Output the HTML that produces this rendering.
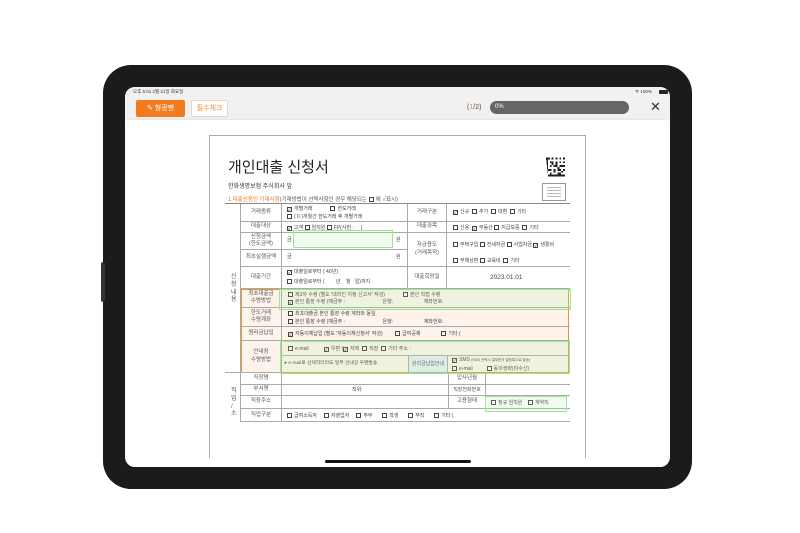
<!DOCTYPE html>
<html><head><meta charset="utf-8"><style>
*{margin:0;padding:0;box-sizing:border-box}
body{width:800px;height:533px;background:#fff;position:relative;overflow:hidden;font-family:"Liberation Sans","Noto Sans CJK KR",sans-serif;color:#333}
.a{position:absolute}
.t{position:absolute;font-size:5px;color:#444;white-space:nowrap;line-height:1}
.l{position:absolute;font-size:5.5px;color:#555;text-align:center;white-space:nowrap;line-height:1.3;display:flex;align-items:center;justify-content:center;border-right:0.6px solid #aaa;border-bottom:0.6px solid #aaa}
.hl{position:absolute;border-bottom:0.6px solid #aaa}
.cb{display:inline-block;width:5px;height:5px;border:0.6px solid #444;vertical-align:-1px;margin-right:2px;font-size:5px;line-height:4px;text-align:center}
.g{position:absolute;border:1.5px solid #9de88f;background:rgba(180,240,170,.18)}
</style></head><body>
<!-- bezel -->
<div class="a" style="left:103px;top:65px;width:589px;height:424px;background:#1b1b1b;border-radius:28px"></div>
<div class="a" style="left:101px;top:262px;width:4px;height:40px;background:#333;border-radius:2px"></div>
<div class="a" style="left:125px;top:87px;width:545px;height:380px;background:#fff;border-radius:10px;overflow:hidden">
  <div class="a" style="left:0;top:0;width:545px;height:33px;background:#f1f1f1"></div>
  <div class="t" style="left:8px;top:3px;font-size:4.5px;color:#333">오후 5:01 2월 21일 화요일</div>
  <div class="t" style="left:510px;top:3px;font-size:4.5px;color:#333">ᯤ 100%</div>
  <div class="a" style="left:534px;top:3px;width:9px;height:4px;background:#222;border-radius:1px"></div>
  <div class="a" style="left:11px;top:13px;width:49px;height:17px;background:#f47a1e;border-radius:2px;color:#fff;font-size:7px;text-align:center;line-height:17px">✎ 형광펜</div>
  <div class="a" style="left:66px;top:13px;width:37px;height:17px;background:#fff;border:0.8px solid #f1d4bd;border-radius:2px;color:#f08a3a;font-size:7px;text-align:center;line-height:16px">필수체크</div>
  <div class="t" style="left:342px;top:17px;font-size:7px;color:#555">(<span style="color:#f08a3a">1</span>/2)</div>
  <div class="a" style="left:365px;top:14px;width:139px;height:13px;background:#666;border-radius:7px;color:#fff;font-size:6px;line-height:13px;padding-left:5px">0%</div>
  <div class="t" style="left:525px;top:13px;font-size:13px;color:#333">✕</div>
  <div class="a" style="left:2px;top:33px;width:541px;height:360px;background:#fff;border-radius:6px 6px 0 0;box-shadow:0 -1px 2px rgba(0,0,0,.06)"></div>
</div>
<!-- paper -->
<div class="a" style="left:209px;top:135px;width:377px;height:323px;border:0.8px solid #aaa;border-bottom:none;background:#fff"></div>
<div class="t" style="left:228px;top:160px;font-size:15px;color:#222">개인대출 신청서</div>
<svg class="a" style="left:546px;top:157px" width="19" height="20" viewBox="0 0 10 10" shape-rendering="crispEdges"><path fill="#222" d="M0 0h1v10h9v-1h-9zM1 0h1v1h-1zM3 0h1v1h-1zM5 0h1v1h-1zM7 0h1v1h-1zM9 0h1v1h-1zM9 2h1v1h-1zM9 4h1v1h-1zM9 6h1v1h-1zM2 2h2v1h-2zM5 2h1v2h-1zM7 2h1v1h-1zM2 4h1v1h-1zM4 4h2v1h-2zM7 4h2v1h-2zM1 6h2v1h-2zM4 6h1v2h-1zM6 6h2v1h-2zM2 8h1v1h-1zM6 8h2v1h-2zM3 3h1v1h-1zM6 5h1v1h-1zM8 7h1v1h-1z"/></svg>
<div class="a" style="left:542px;top:183px;width:24px;height:18px;border:0.6px solid #999;padding:3px 4px"><div style="height:1px;background:#bbb;margin-bottom:2px"></div><div style="height:1px;background:#bbb;margin-bottom:2px"></div><div style="height:1px;background:#bbb;margin-bottom:2px"></div><div style="height:1px;background:#bbb"></div></div>
<div class="t" style="left:228px;top:184px;font-size:6px;color:#333">한화생명보험 주식회사 앞</div>
<div class="t" style="left:228px;top:196px;font-size:5.5px;color:#555"><span style="color:#e8761f">1.대출신청인 기재사항</span>(기재방법이 선택사항인 경우 해당되는 <span class="cb"></span>에 <span style="color:#e8761f;font-size:7px">√</span>표시)</div>
<!-- table -->
<div class="a" style="left:225px;top:203px;width:345px;height:0.8px;background:#888"></div>
<div class="a" style="left:241px;top:289px;width:328px;height:84px;background:#fdf3ea;border:1px solid #e8943f"></div>
<div class="a" style="left:240px;top:204px;width:0.6px;height:218px;background:#aaa"></div>
<div class="hl" style="left:225px;top:372px;width:16px"></div>
<div class="t" style="left:231px;top:274px;font-size:6px;line-height:1.3;white-space:normal;width:6px;color:#555">신 청 내 용</div>
<div class="t" style="left:231px;top:388px;font-size:6px;line-height:1.3;white-space:normal;width:6px;color:#555">직 업 / 소</div>
<div class="l" style="left:241px;top:204px;width:41px;height:18px">거래종류</div>
<div class="l" style="left:241px;top:222px;width:41px;height:11px">대출대상</div>
<div class="l" style="left:241px;top:233px;width:41px;height:17px">신청금액<br>(한도금액)</div>
<div class="l" style="left:241px;top:250px;width:41px;height:17px">최초실행금액</div>
<div class="l" style="left:241px;top:267px;width:41px;height:22px">대출기간</div>
<div class="l" style="left:241px;top:289px;width:41px;height:19px">최초대출금<br>수령방법</div>
<div class="l" style="left:241px;top:308px;width:41px;height:19px">한도거래<br>수령계좌</div>
<div class="l" style="left:241px;top:327px;width:41px;height:14px">원리금납입</div>
<div class="l" style="left:241px;top:341px;width:41px;height:32px">안내장<br>수령방법</div>
<div class="l" style="left:241px;top:373px;width:41px;height:12px">직장명</div>
<div class="l" style="left:241px;top:385px;width:41px;height:11px">부서명</div>
<div class="l" style="left:241px;top:396px;width:41px;height:13px">직장주소</div>
<div class="l" style="left:241px;top:409px;width:41px;height:13px;border-bottom:none">직업구분</div>
<div class="hl" style="left:282px;top:221px;width:288px"></div>
<div class="hl" style="left:282px;top:232px;width:288px"></div>
<div class="hl" style="left:282px;top:249px;width:125px"></div>
<div class="hl" style="left:282px;top:266px;width:288px"></div>
<div class="hl" style="left:282px;top:288px;width:288px"></div>
<div class="hl" style="left:282px;top:307px;width:288px"></div>
<div class="hl" style="left:282px;top:326px;width:288px"></div>
<div class="hl" style="left:282px;top:340px;width:288px"></div>
<div class="hl" style="left:282px;top:355px;width:288px"></div>
<div class="hl" style="left:282px;top:384px;width:288px"></div>
<div class="hl" style="left:282px;top:395px;width:288px"></div>
<div class="hl" style="left:282px;top:408px;width:288px"></div>
<div class="hl" style="left:241px;top:421px;width:329px"></div>
<div class="l" style="left:407px;top:204px;width:40px;height:18px;border-left:0.6px solid #aaa">거래구분</div>
<div class="l" style="left:407px;top:222px;width:40px;height:11px;border-left:0.6px solid #aaa">대출과목</div>
<div class="l" style="left:407px;top:233px;width:40px;height:34px;border-left:0.6px solid #aaa">자금용도<br>(거래목적)</div>
<div class="l" style="left:407px;top:267px;width:40px;height:22px;border-left:0.6px solid #aaa">대출희망일</div>
<div class="l" style="left:408px;top:356px;width:40px;height:17px;border-left:0.6px solid #aaa;background:#e8eef5;font-size:5px">원리금납입안내</div>
<div class="l" style="left:448px;top:373px;width:38px;height:12px;border-left:0.6px solid #aaa">입사년월</div>
<div class="l" style="left:448px;top:385px;width:38px;height:11px;border-left:0.6px solid #aaa;font-size:5px">직장전화번호</div>
<div class="l" style="left:448px;top:396px;width:38px;height:13px;border-left:0.6px solid #aaa">고용형태</div>
<div class="t" style="left:287px;top:206px"><span class="cb">✓</span>개별거래 &nbsp;&nbsp;&nbsp;&nbsp;&nbsp;&nbsp;&nbsp;&nbsp;&nbsp;&nbsp;&nbsp;&nbsp;<span class="cb"></span>한도거래</div>
<div class="t" style="left:287px;top:214px"><span class="cb"></span>( 0 )개월간 한도거래 후 개별거래</div>
<div class="t" style="left:287px;top:225px"><span class="cb">✓</span>고객 <span class="cb"></span>임직원 <span class="cb"></span>FP(사번 : &nbsp;&nbsp;&nbsp;&nbsp;)</div>
<div class="t" style="left:287px;top:238px">금</div><div class="t" style="left:396px;top:238px">원</div>
<div class="t" style="left:287px;top:255px">금</div><div class="t" style="left:396px;top:255px">원</div>
<div class="t" style="left:287px;top:270px"><span class="cb">✓</span>대출일로부터 ( 40년)</div>
<div class="t" style="left:287px;top:279px"><span class="cb"></span>대출일로부터 ( &nbsp;&nbsp;&nbsp;&nbsp;&nbsp;&nbsp;&nbsp;년 &nbsp;&nbsp;&nbsp;월 &nbsp;&nbsp;일)까지</div>
<div class="t" style="left:453px;top:209px"><span class="cb">✓</span>신규 &nbsp;<span class="cb"></span>추가 &nbsp;<span class="cb"></span>대환 &nbsp;<span class="cb"></span>기타</div>
<div class="t" style="left:453px;top:225px"><span class="cb"></span>신용 &nbsp;<span class="cb">✓</span>부동산 <span class="cb"></span>지급보증 &nbsp;<span class="cb"></span>기타</div>
<div class="t" style="left:453px;top:242px"><span class="cb"></span>주택구입 <span class="cb"></span>전세자금 <span class="cb"></span>사업자금 <span class="cb">✓</span>생활비</div>
<div class="t" style="left:453px;top:258px"><span class="cb"></span>부채상환 <span class="cb"></span>교육비 &nbsp;<span class="cb"></span>기타</div>
<div class="t" style="left:490px;top:275px;font-size:6.5px">2023.01.01</div>
<div class="t" style="left:288px;top:292px"><span class="cb"></span>제3자 수령 (별도 '대리인 지정 신고서' 작성) &nbsp;&nbsp;&nbsp;&nbsp;&nbsp;&nbsp;&nbsp;&nbsp;&nbsp;&nbsp;&nbsp;&nbsp;<span class="cb"></span>본인 직접 수령</div>
<div class="t" style="left:288px;top:300px"><span class="cb">✓</span>본인 통장 수령 (예금주 : &nbsp;&nbsp;&nbsp;&nbsp;&nbsp;&nbsp;&nbsp;&nbsp;&nbsp;&nbsp;&nbsp;&nbsp;&nbsp;&nbsp;&nbsp;&nbsp;&nbsp;&nbsp;&nbsp;&nbsp;&nbsp;&nbsp;&nbsp;&nbsp;&nbsp;&nbsp;은행: &nbsp;&nbsp;&nbsp;&nbsp;&nbsp;&nbsp;&nbsp;&nbsp;&nbsp;&nbsp;&nbsp;&nbsp;&nbsp;&nbsp;&nbsp;&nbsp;&nbsp;&nbsp;&nbsp;&nbsp;&nbsp;계좌번호:</div>
<div class="t" style="left:288px;top:311px"><span class="cb"></span>최초대출금 본인 통장 수령 계좌와 동일</div>
<div class="t" style="left:288px;top:319px"><span class="cb"></span>본인 통장 수령 (예금주 : &nbsp;&nbsp;&nbsp;&nbsp;&nbsp;&nbsp;&nbsp;&nbsp;&nbsp;&nbsp;&nbsp;&nbsp;&nbsp;&nbsp;&nbsp;&nbsp;&nbsp;&nbsp;&nbsp;&nbsp;&nbsp;&nbsp;&nbsp;&nbsp;&nbsp;&nbsp;은행: &nbsp;&nbsp;&nbsp;&nbsp;&nbsp;&nbsp;&nbsp;&nbsp;&nbsp;&nbsp;&nbsp;&nbsp;&nbsp;&nbsp;&nbsp;&nbsp;&nbsp;&nbsp;&nbsp;&nbsp;&nbsp;계좌번호:</div>
<div class="t" style="left:288px;top:331px"><span class="cb">✓</span>자동이체납입 (별도 '자동이체신청서' 작성) &nbsp;&nbsp;&nbsp;&nbsp;&nbsp;&nbsp;&nbsp;&nbsp;<span class="cb"></span>급여공제 &nbsp;&nbsp;&nbsp;&nbsp;&nbsp;&nbsp;&nbsp;&nbsp;&nbsp;&nbsp;&nbsp;&nbsp;&nbsp;&nbsp;<span class="cb"></span>기타 (</div>
<div class="t" style="left:288px;top:346px"><span class="cb"></span>e-mail &nbsp;&nbsp;&nbsp;&nbsp;&nbsp;&nbsp;&nbsp;&nbsp;&nbsp;&nbsp;<span class="cb">✓</span>우편 (<span class="cb">✓</span>자택 &nbsp;<span class="cb"></span>직장 &nbsp;<span class="cb"></span>기타 주소 :</div>
<div class="t" style="left:284px;top:362px;font-size:4.8px">● e-mail로 선택하더라도 일부 안내장 우편발송</div>
<div class="t" style="left:452px;top:358px"><span class="cb">✓</span>SMS <span style="font-size:3.5px">(SMS 선택시 일부문자 알림톡으로 발송)</span></div>
<div class="t" style="left:452px;top:366px"><span class="cb"></span>e-mail &nbsp;&nbsp;&nbsp;&nbsp;&nbsp;&nbsp;&nbsp;&nbsp;&nbsp;<span class="cb"></span>동의생략(미수신)</div>
<div class="t" style="left:352px;top:388px">직위:</div>
<div class="t" style="left:491px;top:400px"><span class="cb"></span>정규 임직원 &nbsp;&nbsp;&nbsp;<span class="cb"></span>계약직</div>
<div class="t" style="left:287px;top:413px"><span class="cb"></span>급여소득자 &nbsp;&nbsp;&nbsp;&nbsp;<span class="cb"></span>자영업자 &nbsp;&nbsp;&nbsp;&nbsp;<span class="cb"></span>주부 &nbsp;&nbsp;&nbsp;&nbsp;&nbsp;&nbsp;<span class="cb"></span>학생 &nbsp;&nbsp;&nbsp;&nbsp;&nbsp;&nbsp;<span class="cb"></span>무직 &nbsp;&nbsp;&nbsp;&nbsp;&nbsp;&nbsp;<span class="cb"></span>기타 (</div>
<div class="g" style="left:293px;top:230px;width:100px;height:18px"></div>
<div class="g" style="left:279px;top:289px;width:292px;height:21px"></div>
<div class="g" style="left:280px;top:341px;width:290px;height:33px"></div>
<div class="g" style="left:485px;top:396px;width:82px;height:16px"></div>
<div class="a" style="left:325px;top:460px;width:146px;height:2.5px;background:#111;border-radius:2px"></div>
</body></html>
